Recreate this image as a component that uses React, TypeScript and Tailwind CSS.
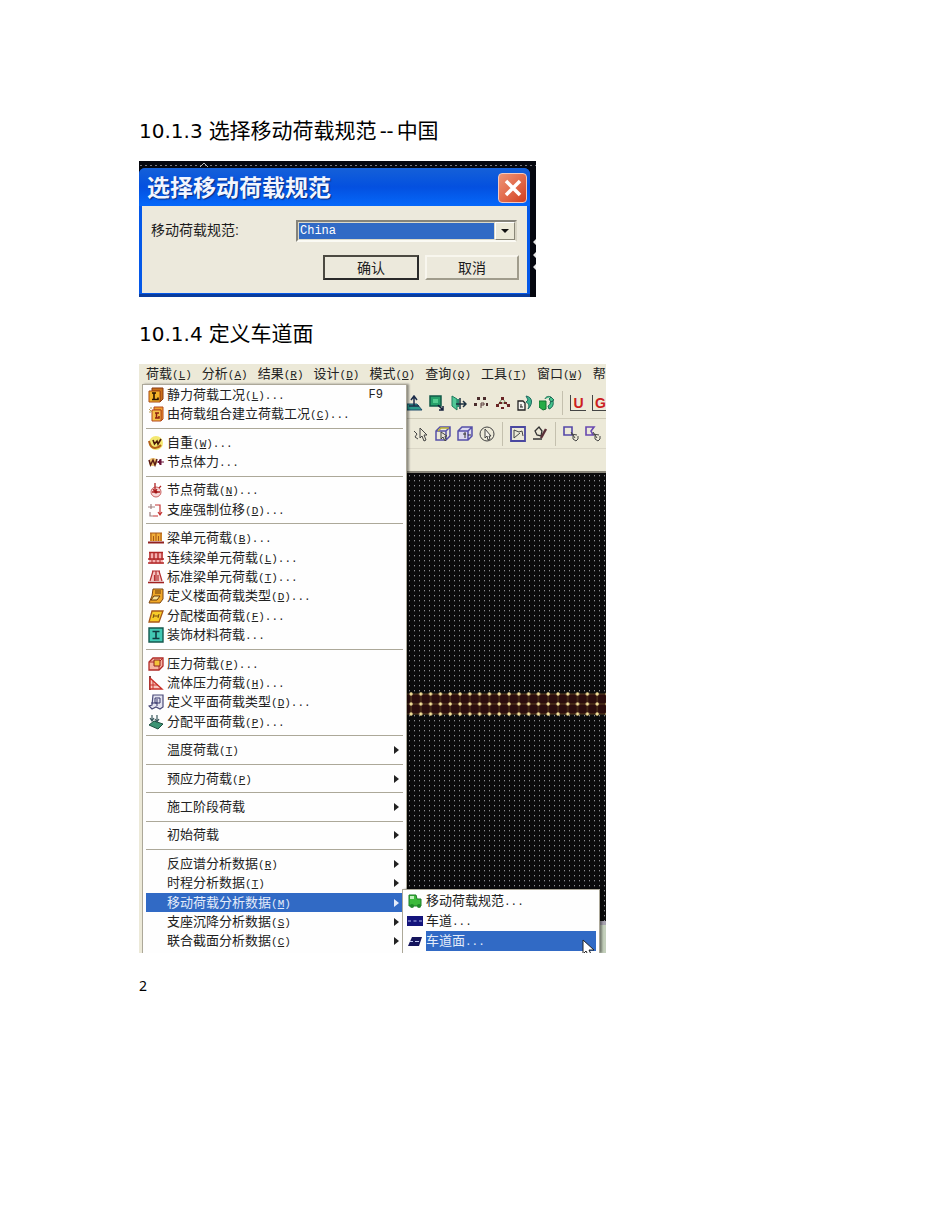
import type { ReactNode } from 'react';
import clsx from 'clsx';

type MenuEntry = {
  text: string;
  hotkey?: string;
  dots?: boolean;
  shortcut?: string;
  icon?: ReactNode;
  submenu?: boolean;
  active?: boolean;
};

const icons = {
  staticCase: (
    <>
      <path d="M4 1h11v11l-3 3V4H4z" fill="#c9701a" stroke="#8a3a10" />
      <path d="M1 4h11v11H1z" fill="#f3b32a" stroke="#a84a14" />
      <path d="M4 6h4M6 6v6M4 12.500h6v-2" fill="none" stroke="#2a1200" strokeWidth="1.600" />
    </>
  ),
  comboCase: (
    <>
      <path d="M6 1h9v12l-2 2V4H6z" fill="#f0a030" stroke="#b4481c" />
      <path d="M4 4h9v11H4z" fill="#f5c04a" stroke="#b4481c" />
      <path d="M7 7h4M8.500 7v5M7 12h4v-2" fill="none" stroke="#8e2010" strokeWidth="1.500" />
      <path d="M1 3l3 3M1 6h2M3 1v2" stroke="#b89a50" />
    </>
  ),
  selfWeight: (
    <>
      <circle cx="8" cy="8" r="7" fill="#f4e870" />
      <path d="M1 6c1 5 3 7 6 7 4 0 5-2 6-3" fill="none" stroke="#b46018" strokeWidth="2" />
      <path d="M5 5l1.500 4L9 6l1 3L13 4" fill="none" stroke="#4a1a08" strokeWidth="1.600" />
    </>
  ),
  nodalBody: (
    <>
      <circle cx="5" cy="8" r="4" fill="#edc070" />
      <path d="M1 6l1.500 5L5 6l2 5L9 5" fill="none" stroke="#5a1c14" strokeWidth="1.500" />
      <path d="M9 8h7M12 5v6M10 8l3-3v6z" fill="#6a1238" stroke="#6a1238" />
    </>
  ),
  nodalLoad: (
    <>
      <circle cx="8" cy="10" r="5" fill="#f8d8d8" stroke="#c86060" />
      <path d="M7 1v9M5 7l2 3 2-3M4 10h8M11 6l2-2" fill="none" stroke="#b02424" strokeWidth="1.300" />
      <circle cx="8" cy="10" r="1.500" fill="#a01818" />
    </>
  ),
  support: (
    <>
      <path d="M3 2v5M0 5h7M2 10v4h3" fill="none" stroke="#a08080" strokeWidth="1.200" />
      <path d="M7 3h5v9M10 10l2 3 2-3M5 14h5" fill="none" stroke="#c43434" strokeWidth="1.200" />
    </>
  ),
  beam: (
    <>
      <path d="M2 3h12v8H2z" fill="#f2ae38" />
      <path d="M2 3h12M3 3v8M8 3v8M13 3v8M5.500 6v5M10.500 6v5" stroke="#a85818" />
      <path d="M0 12.500h16" stroke="#902020" strokeWidth="2" />
    </>
  ),
  lineBeam: (
    <>
      <path d="M1 2h14v12H1z" fill="#f4b0b0" />
      <path d="M1 2.500h14M2 2v8M6 2v8M10 2v8M14 2v8M0 9h16M0 13h16" stroke="#b02828" strokeWidth="1.400" />
      <path d="M4 9v4M8 9v4M12 9v4" stroke="#b02828" />
    </>
  ),
  typicalBeam: (
    <>
      <path d="M5 2h6l3 10H2z" fill="#f6c4c0" />
      <path d="M4 2h8M5 2L2 12M11 2l3 10M8 2v10M6.500 6v6M10 6v6" stroke="#b43030" strokeWidth="1.200" />
      <path d="M0 13.500h16" stroke="#a02020" strokeWidth="1.600" />
    </>
  ),
  floorType: (
    <>
      <path d="M5 1h10v10l-3 4H1l3-7z" fill="#f0a828" stroke="#7a4410" />
      <path d="M7 3h6M7 5h6M3 12l3-4h6l-3 4z" fill="#fbe49a" stroke="#6a3a0c" />
    </>
  ),
  floorAssign: (
    <>
      <path d="M4 3h11l-4 11H1z" fill="#f8cc28" stroke="#a85818" strokeWidth="1.300" />
      <path d="M5 10l1-4M11 6l-1 4M5 8h6" stroke="#7a4c10" />
    </>
  ),
  finishing: (
    <>
      <path d="M1 1h14v14H1z" fill="#42c8b4" stroke="#14584e" strokeWidth="1.400" />
      <path d="M4.500 4.500h7M8 4.500v7M4.500 11.500h7" stroke="#103a40" strokeWidth="1.600" />
    </>
  ),
  pressure: (
    <>
      <path d="M5 2h10v8l-4 4H1V6z" fill="#f8b4a0" stroke="#b02c28" strokeWidth="1.300" />
      <path d="M1 6h10v8M11 6l4-4" fill="none" stroke="#b02c28" />
      <path d="M6 4h6v6H6z" fill="#f3c43a" stroke="#902020" />
    </>
  ),
  hydro: (
    <>
      <path d="M2 1v14" stroke="#501818" strokeWidth="1.600" />
      <path d="M2 3l12 11H2z" fill="#f8c8c0" stroke="#c83028" strokeWidth="1.400" />
      <path d="M5 6v8M2 10h8" stroke="#c83028" />
    </>
  ),
  planeType: (
    <>
      <path d="M5 1h10v12l-3 2-4-2-4 2-3-3 3-1z" fill="#e4e4f0" stroke="#4a4a78" strokeWidth="1.200" />
      <path d="M7 4h5v5H7zM3 9h6M9 5v7" fill="none" stroke="#38386c" />
    </>
  ),
  planeAssign: (
    <>
      <path d="M1 11l5-4 9 3-5 5z" fill="#3c9474" stroke="#1e5040" />
      <path d="M4 1v5M9 1v6M2 4l2 3 2-3M7 5l2 3 2-3" fill="none" stroke="#38585c" strokeWidth="1.200" />
    </>
  ),
  truck: (
    <>
      <path d="M2 2h7l1 4h4v7H2z" fill="#3cba3c" stroke="#1d7a26" />
      <path d="M3 3h4v3H3z" fill="#c4f0c0" />
      <circle cx="5" cy="13" r="2" fill="#1f8a2a" />
      <circle cx="12" cy="13" r="2" fill="#1f8a2a" />
    </>
  ),
  lane: (
    <>
      <path d="M0 3h16v10H0z" fill="#14147c" />
      <path d="M1 8h3M6.500 8h3M12 8h3" stroke="#b0b8f0" strokeWidth="1.200" />
    </>
  ),
  laneSurface: (
    <>
      <path d="M5 4h10l-3 9H1z" fill="#14145c" />
      <path d="M3 8.500h3M8 8.500h4" stroke="#c0c8f0" />
    </>
  ),
};

const menuGroups: MenuEntry[][] = [
  [
    { text: '静力荷载工况', hotkey: 'L', dots: true, shortcut: 'F9', icon: icons.staticCase },
    { text: '由荷载组合建立荷载工况', hotkey: 'C', dots: true, icon: icons.comboCase },
  ],
  [
    { text: '自重', hotkey: 'W', dots: true, icon: icons.selfWeight },
    { text: '节点体力', dots: true, icon: icons.nodalBody },
  ],
  [
    { text: '节点荷载', hotkey: 'N', dots: true, icon: icons.nodalLoad },
    { text: '支座强制位移', hotkey: 'D', dots: true, icon: icons.support },
  ],
  [
    { text: '梁单元荷载', hotkey: 'B', dots: true, icon: icons.beam },
    { text: '连续梁单元荷载', hotkey: 'L', dots: true, icon: icons.lineBeam },
    { text: '标准梁单元荷载', hotkey: 'T', dots: true, icon: icons.typicalBeam },
    { text: '定义楼面荷载类型', hotkey: 'D', dots: true, icon: icons.floorType },
    { text: '分配楼面荷载', hotkey: 'F', dots: true, icon: icons.floorAssign },
    { text: '装饰材料荷载', dots: true, icon: icons.finishing },
  ],
  [
    { text: '压力荷载', hotkey: 'P', dots: true, icon: icons.pressure },
    { text: '流体压力荷载', hotkey: 'H', dots: true, icon: icons.hydro },
    { text: '定义平面荷载类型', hotkey: 'D', dots: true, icon: icons.planeType },
    { text: '分配平面荷载', hotkey: 'P', dots: true, icon: icons.planeAssign },
  ],
  [{ text: '温度荷载', hotkey: 'T', submenu: true }],
  [{ text: '预应力荷载', hotkey: 'P', submenu: true }],
  [{ text: '施工阶段荷载', submenu: true }],
  [{ text: '初始荷载', submenu: true }],
  [
    { text: '反应谱分析数据', hotkey: 'R', submenu: true },
    { text: '时程分析数据', hotkey: 'T', submenu: true },
    { text: '移动荷载分析数据', hotkey: 'M', submenu: true, active: true },
    { text: '支座沉降分析数据', hotkey: 'S', submenu: true },
    { text: '联合截面分析数据', hotkey: 'C', submenu: true },
  ],
];

const submenuEntries: MenuEntry[] = [
  { text: '移动荷载规范', dots: true, icon: icons.truck },
  { text: '车道', dots: true, icon: icons.lane },
  { text: '车道面', dots: true, icon: icons.laneSurface, active: true },
];

const menuBar: MenuEntry[] = [
  { text: '荷载', hotkey: 'L' },
  { text: '分析', hotkey: 'A' },
  { text: '结果', hotkey: 'R' },
  { text: '设计', hotkey: 'D' },
  { text: '模式', hotkey: 'O' },
  { text: '查询', hotkey: 'Q' },
  { text: '工具', hotkey: 'T' },
  { text: '窗口', hotkey: 'W' },
  { text: '帮助' },
];

function Icon({ children }: { children?: ReactNode }) {
  return (
    <svg viewBox="0 0 16 16" className="size-4 shrink-0" aria-hidden="true">
      {children}
    </svg>
  );
}

function Label({ entry }: { entry: MenuEntry }) {
  return (
    <span className="leading-none whitespace-nowrap">
      {entry.text}
      <span className="font-['Liberation_Mono',monospace] text-[11px] leading-none">
        {entry.hotkey && (
          <>
            (<u>{entry.hotkey}</u>)
          </>
        )}
        {entry.dots && '...'}
      </span>
    </span>
  );
}

function MenuRow({ entry }: { entry: MenuEntry }) {
  return (
    <button
      type="button"
      role="menuitem"
      className={clsx(
        'flex min-h-[19px] w-full grow items-center gap-[3px] pl-[2px] text-left leading-none',
        entry.active && 'bg-[#316ac5] text-[#e4ecfa]'
      )}
    >
      <Icon>{entry.icon}</Icon>
      <Label entry={entry} />
      {entry.shortcut && (
        <span className="mr-5 ml-auto font-['Liberation_Mono',monospace] text-xs leading-none">
          {entry.shortcut}
        </span>
      )}
      {entry.submenu && (
        <svg viewBox="0 0 5 8" className="mr-1 ml-auto h-2 w-[5px]" aria-hidden="true">
          <path d="M0 0l5 4-5 4z" fill="currentColor" />
        </svg>
      )}
    </button>
  );
}

function CodeDialog() {
  return (
    <section className="w-full max-w-[397px] bg-[#05070f]">
      <svg className="block h-[7px] w-full" aria-hidden="true">
        <defs>
          <pattern id="edge-dots" width="5" height="7" patternUnits="userSpaceOnUse">
            <rect x="1" y="4" width="2" height="1" fill="#77777c" />
          </pattern>
        </defs>
        <rect width="100%" height="7" fill="url(#edge-dots)" />
        <path d="M61 6l4-4 4 4" fill="none" stroke="#b8b8b8" />
      </svg>
      <div className="flex">
        <div className="grow rounded-t-md border-b-[3px] border-b-[#0a3c9c] bg-[#0458e8]">
          <header className="flex h-[38px] items-center justify-between rounded-t-md bg-linear-to-b from-[#1560d8] via-[#0450e0] to-[#0668fa] pt-[2px] pr-[3px] pl-2">
            <h2 className="text-[23px] leading-8 font-bold whitespace-nowrap text-[#f2f6ff] [text-shadow:1px_1px_1px_#0a2c80]">
              选择移动荷载规范
            </h2>
            <button
              type="button"
              aria-label="关闭"
              className="grid h-[30px] w-[29px] place-items-center rounded border border-[#f3c9c0] bg-linear-to-br from-[#ee9476] to-[#d23c1c]"
            >
              <svg viewBox="0 0 18 18" className="size-[18px]" aria-hidden="true">
                <path d="M2 2l14 14M16 2L2 16" stroke="#fff" strokeWidth="3.500" />
              </svg>
            </button>
          </header>
          <form
            className="mx-[3px] bg-[#ece9dc] pt-[14px] pr-2 pb-[13px] pl-[9px] text-[14px] text-[#1c1c1c]"
            onSubmit={(e) => e.preventDefault()}
          >
            <div className="flex items-start justify-between pr-[2px]">
              <label htmlFor="code" className="leading-5 whitespace-nowrap">
                移动荷载规范:
              </label>
              <div className="flex h-[22px] w-[221px] border-2 border-t-[#85837a] border-r-[#d8d4c4] border-b-[#fbfaf4] border-l-[#85837a] bg-white">
                <select
                  id="code"
                  className="min-w-0 grow appearance-none border border-[#dcd9c8] bg-[#316ac5] pl-px font-['Liberation_Mono',monospace] text-xs leading-4 text-white"
                >
                  <option>China</option>
                </select>
                <span className="grid w-5 place-items-center border border-t-white border-r-[#8a8778] border-b-[#8a8778] border-l-white bg-[#ece9d8]">
                  <svg viewBox="0 0 8 4" className="h-1 w-2" aria-hidden="true">
                    <path d="M0 0h8L4 4z" fill="#111" />
                  </svg>
                </span>
              </div>
            </div>
            <div className="mt-[13px] flex justify-end gap-[6px]">
              <button
                type="submit"
                className="h-[25px] w-[96px] border-2 border-t-[#4c4a42] border-r-[#2a2a2a] border-b-[#2a2a2a] border-l-[#4c4a42] leading-5"
              >
                确认
              </button>
              <button
                type="button"
                className="h-[25px] w-[94px] border-2 border-t-[#f8f6ee] border-r-[#a09c8c] border-b-[#a09c8c] border-l-[#f8f6ee] leading-5"
              >
                取消
              </button>
            </div>
          </form>
        </div>
        <svg viewBox="0 0 6 129" className="w-[6px] shrink-0" aria-hidden="true">
          <path d="M6 71l-3 3 3 3zM6 84l-3 3 3 3zM6 96l-3 3 3 3z" fill="#e8e8e8" />
        </svg>
      </div>
    </section>
  );
}

type Tool = { name: string; art: ReactNode };

const topTools: Tool[] = [
  {
    name: '激活',
    art: (
      <>
        <path d="M0 9h10l5 6H0z" fill="#2a9a8c" stroke="#1c4a6a" />
        <path d="M7 2v9M4 5l3-4 3 4M2 11h10" fill="none" stroke="#1c2c4a" strokeWidth="1.500" />
      </>
    ),
  },
  {
    name: '钝化',
    art: (
      <>
        <path d="M1 1h11v10H1z" fill="#27a06a" stroke="#125a48" strokeWidth="1.500" />
        <path d="M4 4h5v4H4z" fill="#54cc90" />
        <path d="M9 10l5 5M14 11v4h-4" fill="none" stroke="#14203c" strokeWidth="1.500" />
      </>
    ),
  },
  {
    name: '全部激活',
    art: (
      <>
        <path d="M1 1l5 3v11l-5-4z" fill="#52c898" stroke="#1c7a5c" />
        <path d="M6 4h2v8H6" fill="#2a9070" />
        <path d="M5 9h10M12 6l3 3-3 3M9 3v11" fill="none" stroke="#1c3040" strokeWidth="1.500" />
      </>
    ),
  },
  {
    name: '节点',
    art: (
      <>
        <path d="M4 2h3v3H4zM10 2h3v3h-3zM1 8h3v3H1zM13 8h2v3h-2z" fill="#4a2c2c" />
        <path d="M8 13V8h3v2H8" fill="none" stroke="#5a3c3c" />
      </>
    ),
  },
  {
    name: '单元',
    art: (
      <>
        <path d="M7 4l-5 7M8 4l5 7M4 8h8" stroke="#6a8a5a" />
        <path
          d="M6 2h3v3H6zM1 9h3v3H1zM12 9h3v3h-3zM4 7h3v2H4zM9 7h3v2H9zM6 12h3v2H6z"
          fill="#6a2424"
        />
      </>
    ),
  },
  {
    name: '复制',
    art: (
      <>
        <path d="M1 6h5l2 2v7H1z" fill="#f4f4f0" stroke="#222" strokeWidth="1.300" />
        <path d="M3 12h3M4 9v3" stroke="#222" />
        <path d="M9 1c7 1 7 8 2 13 2-4 0-6-2-7l2-2z" fill="#3cb48c" stroke="#206c60" />
      </>
    ),
  },
  {
    name: '刷新',
    art: (
      <>
        <path d="M0 6h7v8l-3 1-4-3z" fill="#26ac46" stroke="#127030" />
        <path d="M6 4c1-3 4-3 6-2M12 2l3 3-3 2-2-3zM14 6c1 4-1 7-4 8l-1-3c2-1 3-3 2-4z" fill="#44c48c" stroke="#1c6a54" />
      </>
    ),
  },
];

const letterTools = [
  { name: '用户坐标系', letter: 'U' },
  { name: '整体坐标系', letter: 'G' },
];

const pickTools: Tool[] = [
  {
    name: '选择',
    art: <path d="M1 5l3 3-2 3 3 2M7 2v10l2-2 2 5 2-1-2-5h3z" fill="none" stroke="#444" />,
  },
  {
    name: '窗口选择',
    art: (
      <>
        <path d="M1 5l4-4h10v9l-4 4H1zM1 5h10v9M11 5l4-4" fill="none" stroke="#5550a8" strokeWidth="1.500" />
        <path d="M3 5l3-3h8" fill="none" stroke="#b8b030" strokeWidth="1.500" />
        <path d="M6 6v7l2-2 2 4 1-1-1-4h2z" fill="#e8e4d8" stroke="#444" />
      </>
    ),
  },
  {
    name: '立体选择',
    art: (
      <>
        <path d="M1 5l4-4h10v9l-4 4H1zM1 5h10v9M11 5l4-4" fill="#dcdaf0" stroke="#5550a8" strokeWidth="1.500" />
        <path d="M6 8h3M8 6v6M11 9h3" stroke="#333" />
      </>
    ),
  },
  {
    name: '圆选择',
    art: (
      <>
        <circle cx="8" cy="8" r="7" fill="none" stroke="#444" />
        <path d="M6 3v9l2-2 1 4 2-1-1-3h2z" fill="#f4f2ea" stroke="#444" />
      </>
    ),
  },
];

const editTools: Tool[] = [
  {
    name: '多边形',
    art: (
      <>
        <path d="M1 1h14v14H1z" fill="none" stroke="#4a48a0" strokeWidth="1.800" />
        <path d="M4 12V4l5 2 3-1 1 5M4 12l6-5" fill="none" stroke="#444" />
      </>
    ),
  },
  {
    name: '画笔',
    art: (
      <>
        <path d="M3 5l4-4 3 4-1 5-4-1zM1 13h9" fill="none" stroke="#333" strokeWidth="1.300" />
        <path d="M14 3L9 12" stroke="#5a3038" strokeWidth="2.500" />
      </>
    ),
  },
];

const moveTools: Tool[] = [
  {
    name: '移动',
    art: (
      <>
        <path d="M1 1h8v8H1z" fill="none" stroke="#5448a8" strokeWidth="1.600" />
        <path d="M8 8l6 1M10 9v4l3 2 2-2v-3M8 6l4 6" fill="none" stroke="#444" />
      </>
    ),
  },
  {
    name: '移动单元',
    art: (
      <>
        <path d="M1 1h8L6 5l2 4H1z" fill="none" stroke="#6848b0" strokeWidth="1.600" />
        <path d="M8 8l6 1M10 9v4l3 2 2-2v-3M8 6l4 6" fill="none" stroke="#444" />
      </>
    ),
  },
];

function ToolGroup({ tools }: { tools: Tool[] }) {
  return tools.map((tool) => (
    <button key={tool.name} type="button" aria-label={tool.name} className="shrink-0">
      <Icon>{tool.art}</Icon>
    </button>
  ));
}

function ToolDivider() {
  return <span className="mx-px h-6 w-px shrink-0 bg-[#c4c0ae]" />;
}

function ModelView() {
  return (
    <svg className="block w-full grow" aria-hidden="true">
      <defs>
        <pattern id="grid-dots" width="5" height="5" patternUnits="userSpaceOnUse">
          <rect x="2" y="2" width="1" height="1" fill="#8c8c90" />
          <rect x="2" y="3" width="1" height="1" fill="#38383a" />
        </pattern>
        <pattern id="nodes" x="-1" y="216" width="9.800" height="10" patternUnits="userSpaceOnUse">
          <path d="M0 5h10M5 0v10" stroke="#5a4020" strokeWidth="1" />
          <circle cx="5" cy="5" r="1.700" fill="#f4e09a" />
        </pattern>
      </defs>
      <rect width="100%" height="100%" fill="#0b0b0c" />
      <rect width="100%" height="100%" fill="url(#grid-dots)" />
      <rect y="221" width="100%" height="20" fill="#2c0d0d" />
      <rect y="219" width="100%" height="24" fill="url(#nodes)" />
    </svg>
  );
}

function ProgramWindow() {
  return (
    <section className="relative flex min-h-[589px] w-full max-w-[467px] flex-col overflow-hidden bg-[#ece9d8] text-[13px] text-[#222]">
      <nav className="flex h-5 items-center gap-[10px] overflow-hidden pl-[7px]" aria-label="主菜单">
        {menuBar.map((entry) => (
          <button key={entry.text} type="button" className="shrink-0 leading-none">
            <Label entry={entry} />
          </button>
        ))}
      </nav>
      <div className="flex grow">
        <div
          role="menu"
          className="z-10 ml-[3px] flex w-[265px] shrink-0 flex-col border-x border-t border-[#aca899] bg-[#fefefe] pr-[3px] pb-[2px] pl-[3px] shadow-[2px_0_2px_#00000066]"
        >
          {menuGroups.map((group, i) => (
            <div
              key={group[0].text}
              className="flex flex-col"
              style={{ flexGrow: group.length }}
            >
              {i > 0 && <hr className="my-1 border-t border-[#aca899]" />}
              {group.map((entry) => (
                <MenuRow key={entry.text} entry={entry} />
              ))}
            </div>
          ))}
        </div>
        <div className="flex min-w-0 grow flex-col">
          <div className="flex h-[35px] items-center gap-[6px] overflow-hidden border-b border-[#cfcbb8] pt-1">
            <ToolGroup tools={topTools} />
            <ToolDivider />
            {letterTools.map((tool) => (
              <button
                key={tool.name}
                type="button"
                aria-label={tool.name}
                className="flex h-4 w-4 shrink-0 items-center justify-center border-b border-l border-[#444] font-['Liberation_Sans',sans-serif] text-sm leading-4 font-bold text-[#cc2020]"
              >
                {tool.letter}
              </button>
            ))}
          </div>
          <div className="flex h-[30px] items-center gap-[6px] overflow-hidden border-b border-[#dad6c6] pl-[6px]">
            <ToolGroup tools={pickTools} />
            <ToolDivider />
            <ToolGroup tools={editTools} />
            <ToolDivider />
            <ToolGroup tools={moveTools} />
          </div>
          <div className="h-6 border-b-2 border-[#8c897c]" />
          <ModelView />
          <div className="h-8 border-t-4 border-[#a8a4b0] bg-[#c4d0bc]" />
        </div>
      </div>
      <div
        role="menu"
        className="absolute right-[6px] bottom-0 z-20 w-[198px] border-x border-t border-[#aca899] bg-[#fefefe] pt-px pr-[3px] pb-[2px] pl-[2px] shadow-[2px_0_2px_#00000066]"
      >
        {submenuEntries.map((entry) => (
          <button
            key={entry.text}
            type="button"
            role="menuitem"
            className="flex w-full items-center gap-[3px] pl-[2px] text-left"
          >
            <Icon>{entry.icon}</Icon>
            <span
              className={clsx(
                'flex h-5 grow items-center',
                entry.active && 'bg-[#316ac5] text-[#e4ecfa]'
              )}
            >
              <Label entry={entry} />
            </span>
          </button>
        ))}
        <svg
          viewBox="0 0 13 18"
          className="absolute right-1 -bottom-1 h-[18px] w-[13px]"
          aria-hidden="true"
        >
          <path d="M1 1v14l3-3 3 6 3-1-3-6h5z" fill="#fff" stroke="#222" />
        </svg>
      </div>
    </section>
  );
}

function Heading({ number, children }: { number: string; children: ReactNode }) {
  return (
    <h1 className="flex items-baseline gap-[6px] text-[21px] leading-8 text-black">
      <span className="font-['DejaVu_Sans',sans-serif] text-[20px]">{number}</span>
      <span>{children}</span>
    </h1>
  );
}

const App = () => {
  return (
    <main className="min-h-screen bg-white px-[139px] pt-[115px] pb-20 font-['Liberation_Sans','Noto_Sans_CJK_SC',sans-serif]">
      <Heading number="10.1.3">
        选择移动荷载规范<span className="mx-[3px]">--</span>中国
      </Heading>
      <div className="mt-[14px] mb-[21px]">
        <CodeDialog />
      </div>
      <Heading number="10.1.4">定义车道面</Heading>
      <div className="mt-[14px]">
        <ProgramWindow />
      </div>
      <p className="mt-6 font-['Noto_Sans',sans-serif] text-sm leading-[18px]">2</p>
    </main>
  );
};

export default App;
